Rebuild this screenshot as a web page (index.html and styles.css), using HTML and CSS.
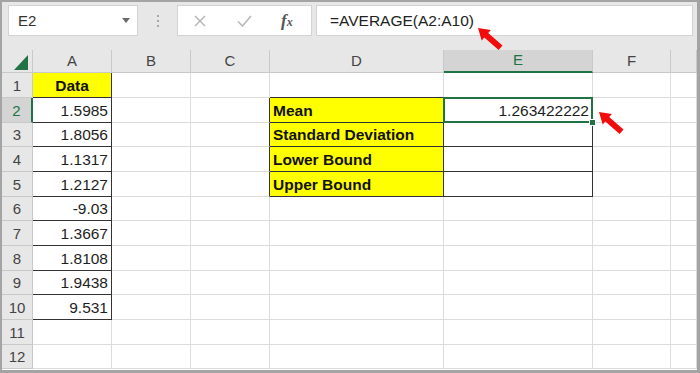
FILE: index.html
```html
<!DOCTYPE html>
<html>
  <head>
    <title>Confidence Interval</title>
    <link rel="stylesheet" href="styles.css">
  </head>
  <body>
    <div class="window">
      <div class="toolbar">
        <div class="namebox">
          <span>E2</span>
          <span class="caret"></span>
        </div>
        <div class="grip"><i></i><i></i><i></i></div>
        <div class="fx-buttons">
          <svg class="btn-cancel" width="12" height="12" viewBox="0 0 12 12">
            <path d="M1 1 L11 11 M11 1 L1 11" stroke="#b3b3b3" stroke-width="1.4" fill="none" />
          </svg>
          <svg class="btn-enter" width="15" height="12" viewBox="0 0 15 12">
            <path d="M1 6.5 L5.5 11 L14 1" stroke="#b8b8b8" stroke-width="1.6" fill="none" />
          </svg>
          <span class="fx">f<span>x</span></span>
        </div>
        <div class="formula">=AVERAGE(A2:A10)</div>
      </div>

      <div class="sheet">
        <!-- column headers -->
        <div class="hd corner">
          <svg width="14" height="15" viewBox="0 0 14 15"><polygon points="14,0 14,15 0,15" fill="#217346" /></svg>
        </div>
        <div class="hd col">A</div>
        <div class="hd col">B</div>
        <div class="hd col">C</div>
        <div class="hd col">D</div>
        <div class="hd col active">E</div>
        <div class="hd col">F</div>
        <div class="hd col"></div>

        <!-- row 1 -->
        <div class="hd rh">1</div>
        <div class="title boxed">Data</div>
        <div></div>
        <div></div>
        <div class="edge-b"></div>
        <div class="edge-b"></div>
        <div></div>
        <div></div>

        <!-- row 2 -->
        <div class="hd rh active">2</div>
        <div class="num boxed">1.5985</div>
        <div></div>
        <div class="edge-r"></div>
        <div class="label boxed">Mean</div>
        <div class="num boxed selected">1.263422222<span class="handle"></span></div>
        <div></div>
        <div></div>

        <!-- row 3 -->
        <div class="hd rh">3</div>
        <div class="num boxed">1.8056</div>
        <div></div>
        <div class="edge-r"></div>
        <div class="label boxed">Standard Deviation</div>
        <div class="boxed"></div>
        <div></div>
        <div></div>

        <!-- row 4 -->
        <div class="hd rh">4</div>
        <div class="num boxed">1.1317</div>
        <div></div>
        <div class="edge-r"></div>
        <div class="label boxed">Lower Bound</div>
        <div class="boxed"></div>
        <div></div>
        <div></div>

        <!-- row 5 -->
        <div class="hd rh">5</div>
        <div class="num boxed">1.2127</div>
        <div></div>
        <div class="edge-r"></div>
        <div class="label boxed">Upper Bound</div>
        <div class="boxed"></div>
        <div></div>
        <div></div>

        <!-- row 6 -->
        <div class="hd rh">6</div>
        <div class="num boxed">-9.03</div>
        <div></div><div></div><div></div><div></div><div></div><div></div>

        <!-- row 7 -->
        <div class="hd rh">7</div>
        <div class="num boxed">1.3667</div>
        <div></div><div></div><div></div><div></div><div></div><div></div>

        <!-- row 8 -->
        <div class="hd rh">8</div>
        <div class="num boxed">1.8108</div>
        <div></div><div></div><div></div><div></div><div></div><div></div>

        <!-- row 9 -->
        <div class="hd rh">9</div>
        <div class="num boxed">1.9438</div>
        <div></div><div></div><div></div><div></div><div></div><div></div>

        <!-- row 10 -->
        <div class="hd rh">10</div>
        <div class="num boxed">9.531</div>
        <div></div><div></div><div></div><div></div><div></div><div></div>

        <!-- row 11 -->
        <div class="hd rh">11</div>
        <div></div><div></div><div></div><div></div><div></div><div></div><div></div>

        <!-- row 12 -->
        <div class="hd rh">12</div>
        <div></div><div></div><div></div><div></div><div></div><div></div><div></div>
      </div>

      <!-- red annotation arrows -->
      <svg class="arrow arrow-formula" width="28" height="26" viewBox="0 0 28 26">
        <polygon points="1,1 13.9,3 11.2,6 25.5,18.5 21.6,23 7.3,10.5 4.7,13.5" fill="#f20d0d" />
      </svg>
      <svg class="arrow arrow-cell" width="28" height="26" viewBox="0 0 28 26">
        <polygon points="1,1 13.9,3 11.2,6 25.5,18.5 21.6,23 7.3,10.5 4.7,13.5" fill="#f20d0d" />
      </svg>
    </div>
  </body>
</html>
```

FILE: styles.css
```css
* {
  box-sizing: border-box;
}
body {
  margin: 0;
  font-family: "Liberation Sans", Arial, sans-serif;
}
.window {
  position: relative;
  width: 700px;
  height: 373px;
  border: 2px solid #a4a4a4;
  border-right-width: 3px;
  border-bottom-width: 3px;
  background: #e7e7e7;
  display: flex;
  flex-direction: column;
  overflow: hidden;
}

/* formula bar */
.toolbar {
  height: 48px;
  flex: none;
  display: flex;
  align-items: flex-start;
  padding: 3px 4px 0 6px;
}
.namebox,
.fx-buttons,
.formula {
  height: 31px;
  background: #fff;
  border: 1px solid #d3d3d3;
  display: flex;
  align-items: center;
}
.namebox {
  width: 130px;
  justify-content: space-between;
  padding: 0 7px 0 9px;
  font-size: 15px;
  color: #333;
}
.caret {
  width: 0;
  height: 0;
  border-left: 4px solid transparent;
  border-right: 4px solid transparent;
  border-top: 5px solid #6b6b6b;
}
.grip {
  width: 39px;
  height: 31px;
  display: flex;
  flex-direction: column;
  align-items: center;
  justify-content: center;
  gap: 3px;
}
.grip i {
  width: 2px;
  height: 2px;
  background: #a8a8a8;
}
.fx-buttons {
  width: 135px;
  padding-left: 16px;
}
.btn-enter {
  margin-left: 31px;
}
.fx {
  margin-left: 29px;
  font-family: "Liberation Serif", serif;
  font-style: italic;
  font-weight: bold;
  font-size: 17px;
  color: #555;
}
.fx span {
  font-size: 12px;
}
.formula {
  flex: 1;
  margin-left: 4px;
  padding-left: 13px;
  font-size: 15.5px;
  color: #222;
}

/* worksheet grid */
.sheet {
  flex: 1;
  display: grid;
  grid-template-columns: 31px 79px 79px 79px 174px 149px 78px 1fr;
  grid-template-rows: 23px repeat(4, 25px 25px 24px);
  background: #fff;
}
.sheet > div {
  position: relative;
  display: flex;
  align-items: flex-end;
  padding: 0 3px 2px;
  border-right: 1px solid #dcdcdc;
  border-bottom: 1px solid #dcdcdc;
  font-size: 15.5px;
  line-height: 18px;
  color: #1e1e1e;
  white-space: nowrap;
}
.sheet > .hd {
  background: #e7e7e7;
  border-color: #c9c9c9;
  justify-content: center;
  font-size: 15px;
  color: #444;
}
.sheet > .corner {
  justify-content: flex-end;
  padding: 0 4px 2px 0;
}
.sheet > .hd.active {
  background: #d4d4d4;
  color: #217346;
}
.sheet > .col.active {
  border-bottom: 2px solid #217346;
}
.sheet > .rh.active {
  border-right: 2px solid #217346;
}
.sheet > .num {
  justify-content: flex-end;
}
.sheet > .title {
  justify-content: center;
  font-weight: bold;
  background: #ffff00;
  color: #111;
}
.sheet > .label {
  font-weight: bold;
  background: #ffff00;
  color: #111;
}
.sheet > .boxed {
  border-right-color: #333;
  border-bottom-color: #333;
}
.sheet > .edge-r {
  border-right-color: #333;
}
.sheet > .edge-b {
  border-bottom-color: #333;
}
.selected::after {
  content: "";
  position: absolute;
  left: -1px;
  top: -1px;
  right: -1px;
  bottom: -1px;
  border: 2px solid #217346;
}
.handle {
  position: absolute;
  right: -4px;
  bottom: -4px;
  width: 7px;
  height: 7px;
  background: #217346;
  border: 1px solid #fff;
  z-index: 1;
}

/* annotations */
.arrow {
  position: absolute;
}
.arrow-formula {
  left: 475px;
  top: 25px;
}
.arrow-cell {
  left: 596px;
  top: 109px;
}
```
